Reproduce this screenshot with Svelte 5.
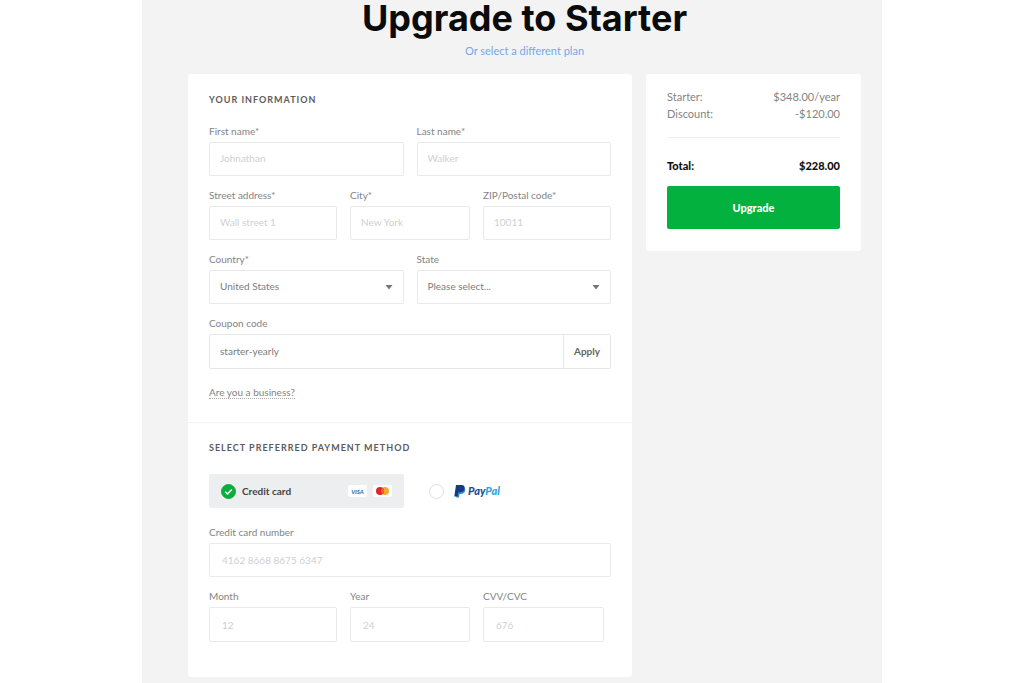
<script>
  let method = $state('card');
  let coupon = $state('starter-yearly');
</script>

{#snippet caret()}
  <svg class="caret" viewBox="0 0 8 5" aria-hidden="true"><path d="M.5 0h7L4 4.500z" fill="#777" /></svg>
{/snippet}

{#snippet radio(value, name)}
  <span class="radio">
    <input type="radio" name="method" {value} bind:group={method} aria-label={name} />
    {#if method === value}
      <svg viewBox="0 0 16 16" aria-hidden="true">
        <path d="M4.5 8.2l2.4 2.4 4.6-4.8" fill="none" stroke="#fff" stroke-width="1.6" />
      </svg>
    {/if}
  </span>
{/snippet}

<main class="page">
  <header>
    <h1>Upgrade to Starter</h1>
    <a class="plan" href="#plans">Or select a different plan</a>
  </header>

  <div class="columns">
    <form class="card" onsubmit={(e) => e.preventDefault()}>
      <section>
        <h2>Your information</h2>
        <div class="row halves">
          <label class="field"><span>First name*</span><input placeholder="Johnathan" /></label>
          <label class="field"><span>Last name*</span><input placeholder="Walker" /></label>
        </div>
        <div class="row thirds">
          <label class="field"><span>Street address*</span><input placeholder="Wall street 1" /></label>
          <label class="field"><span>City*</span><input placeholder="New York" /></label>
          <label class="field"><span>ZIP/Postal code*</span><input placeholder="10011" /></label>
        </div>
        <div class="row halves">
          <label class="field">
            <span>Country*</span>
            <span class="select"><select><option>United States</option></select>{@render caret()}</span>
          </label>
          <label class="field">
            <span>State</span>
            <span class="select"><select><option>Please select...</option></select>{@render caret()}</span>
          </label>
        </div>
        <div class="field">
          <label for="coupon">Coupon code</label>
          <div class="coupon">
            <input id="coupon" bind:value={coupon} />
            <button type="button">Apply</button>
          </div>
        </div>
        <a class="business" href="#business">Are you a business?</a>
      </section>

      <section class="payment">
        <h2>Select preferred payment method</h2>
        <div class="row halves methods">
          <label class="method" class:active={method === 'card'}>
            {@render radio('card', 'Credit card')}
            <b>Credit card</b>
            <svg class="brand" viewBox="0 0 19 12" role="img" aria-label="Visa">
              <rect width="19" height="12" rx="2" fill="#fff" />
              <text x="9.5" y="8.5" text-anchor="middle" font-size="6" font-weight="900" font-style="italic" fill="#3275b5">VISA</text>
            </svg>
            <svg class="brand" viewBox="0 0 19 12" role="img" aria-label="Mastercard">
              <rect width="19" height="12" rx="2" fill="#fff" />
              <circle cx="12" cy="6" r="4" fill="#f9a72b" />
              <circle cx="7" cy="6" r="4" fill="#e0262d" />
              <path d="M9.5 2.9a4 4 0 0 1 0 6.2a4 4 0 0 1 0-6.2z" fill="#f26a21" />
            </svg>
          </label>
          <label class="method" class:active={method === 'paypal'}>
            {@render radio('paypal', 'PayPal')}
            <svg class="paypal" viewBox="0 0 50 14" role="img" aria-label="PayPal">
              <path d="M4 3h5c2 .4 2.600 2 2 4-.6 2.200-2.200 3-4.400 3H5.500L5 13.500H2.200z" fill="#2790d0" />
              <path d="M2 1h5.500c2.500 0 3.700 1.500 3 4-.6 2.300-2.200 3.300-4.600 3.300H4.300L3.600 12.500H.3z" fill="#173a80" />
              <text x="14" y="11" font-size="11" font-weight="900" font-style="italic"><tspan fill="#244c91">Pay</tspan><tspan fill="#2fa3dc">Pal</tspan></text>
            </svg>
          </label>
        </div>
        <label class="field number"><span>Credit card number</span><input placeholder="4162 8668 8675 6347" /></label>
        <div class="row thirds expiry">
          <label class="field"><span>Month</span><input placeholder="12" /></label>
          <label class="field"><span>Year</span><input placeholder="24" /></label>
          <label class="field cvv"><span>CVV/CVC</span><input placeholder="676" /></label>
        </div>
      </section>
    </form>

    <aside class="card summary">
      <dl>
        <div><dt>Starter:</dt><dd>$348.00/year</dd></div>
        <div><dt>Discount:</dt><dd>-$120.00</dd></div>
        <div class="total"><dt>Total:</dt><dd>$228.00</dd></div>
      </dl>
      <button class="upgrade" type="button">Upgrade</button>
    </aside>
  </div>
</main>

<style>
  :global(body) {
    background: #fff;
  }
  .page, .page * {
    box-sizing: border-box;
  }
  .page {
    max-width: 740px;
    min-height: 100vh;
    margin: 0 auto;
    padding: 0 21px 6px 46px;
    background: #f3f3f3;
    color: #848484;
    font: 10px/12px Lato, "Open Sans", sans-serif;
  }
  header {
    display: flex;
    flex-direction: column;
    align-items: center;
    gap: 9px;
    padding-bottom: 17px;
  }
  h1 {
    margin: 0;
    color: #0b0b0b;
    font: 700 36px/36px Inter, sans-serif;
  }
  .plan {
    color: #72aae8;
    font-size: 11px;
    line-height: 12px;
    text-decoration: none;
  }
  .columns {
    display: grid;
    grid-template-columns: minmax(0, 1fr) 215px;
    align-items: start;
    gap: 14px;
  }
  .card {
    background: #fff;
    border-radius: 3px;
  }
  section {
    display: flex;
    flex-direction: column;
    gap: 13px;
    padding: 20px 21px 24px;
  }
  .payment {
    padding: 19px 21px 35px;
    border-top: 1px solid #f3f3f3;
  }
  h2 {
    margin: 0 0 6px;
    color: #5c5c5c;
    font-size: 9px;
    font-weight: 700;
    line-height: 12px;
    letter-spacing: 1px;
    text-transform: uppercase;
  }
  .row {
    display: grid;
    gap: 13px;
  }
  .halves {
    grid-template-columns: 1fr 1fr;
  }
  .thirds {
    grid-template-columns: 128fr 120fr 128fr;
  }
  .field {
    display: flex;
    flex-direction: column;
    gap: 5px;
    min-width: 0;
  }
  input, select, button {
    font: inherit;
  }
  .field input, select {
    width: 100%;
    height: 34px;
    margin: 0;
    padding: 0 10px 2px;
    border: 1px solid #e9e9e9;
    border-radius: 2px;
    background: #fff;
    color: #7c7c7c;
    outline-color: #03b13e;
  }
  .field input::placeholder {
    color: #d0d0d0;
    opacity: 1;
  }
  .select {
    display: grid;
    align-items: center;
  }
  select {
    grid-area: 1 / 1;
    appearance: none;
  }
  .caret {
    grid-area: 1 / 1;
    justify-self: end;
    width: 8px;
    height: 5px;
    margin-right: 11px;
    pointer-events: none;
  }
  .coupon {
    display: flex;
    height: 35px;
    border: 1px solid #e6e6e6;
    border-radius: 2px;
  }
  .coupon input {
    flex: 1;
    height: 100%;
    border: 0;
  }
  .coupon button {
    width: 47px;
    padding: 0 0 2px;
    border: 0;
    border-left: 1px solid #e6e6e6;
    background: #fff;
    color: #666;
    font-weight: 700;
  }
  .business {
    align-self: flex-start;
    margin: 4px 0 -1px;
    color: inherit;
    text-decoration: none;
    border-bottom: 1px dotted #aaa;
  }
  .methods {
    margin: 1px 0 5px;
  }
  .method {
    display: flex;
    align-items: center;
    gap: 6px;
    height: 34px;
    padding: 0 12px;
    border-radius: 2px;
  }
  .method.active {
    background: #eceeef;
  }
  .method b {
    flex: 1;
    color: #444;
  }
  .radio {
    display: grid;
    width: 15px;
    height: 15px;
  }
  .radio input, .radio svg {
    grid-area: 1 / 1;
    width: 15px;
    height: 15px;
    margin: 0;
    pointer-events: none;
  }
  .radio input {
    appearance: none;
    border: 1px solid #dedede;
    border-radius: 50%;
    background: #fff;
  }
  .radio input:checked {
    border-color: #0bae3d;
    background: #0bae3d;
  }
  .brand {
    width: 19px;
    height: 12px;
  }
  .paypal {
    width: 50px;
    height: 14px;
    margin-left: 4px;
  }
  .number input {
    padding: 0 12px;
  }
  .expiry input {
    height: 35px;
    padding: 0 12px;
  }
  .cvv {
    margin-right: 7px;
  }
  .summary {
    padding: 14px 21px 22px;
  }
  dl {
    margin: 0;
    font-size: 11px;
    line-height: 17px;
  }
  dl div {
    display: flex;
    justify-content: space-between;
  }
  dd {
    margin: 0;
  }
  .total {
    margin-top: 15px;
    padding: 19px 0 12px;
    border-top: 1px solid #eee;
    color: #111;
    font-weight: 900;
  }
  .upgrade {
    width: 100%;
    height: 43px;
    border: 0;
    border-radius: 2px;
    background: #03b13e;
    color: #fff;
    font-size: 11px;
    font-weight: 900;
  }
</style>
